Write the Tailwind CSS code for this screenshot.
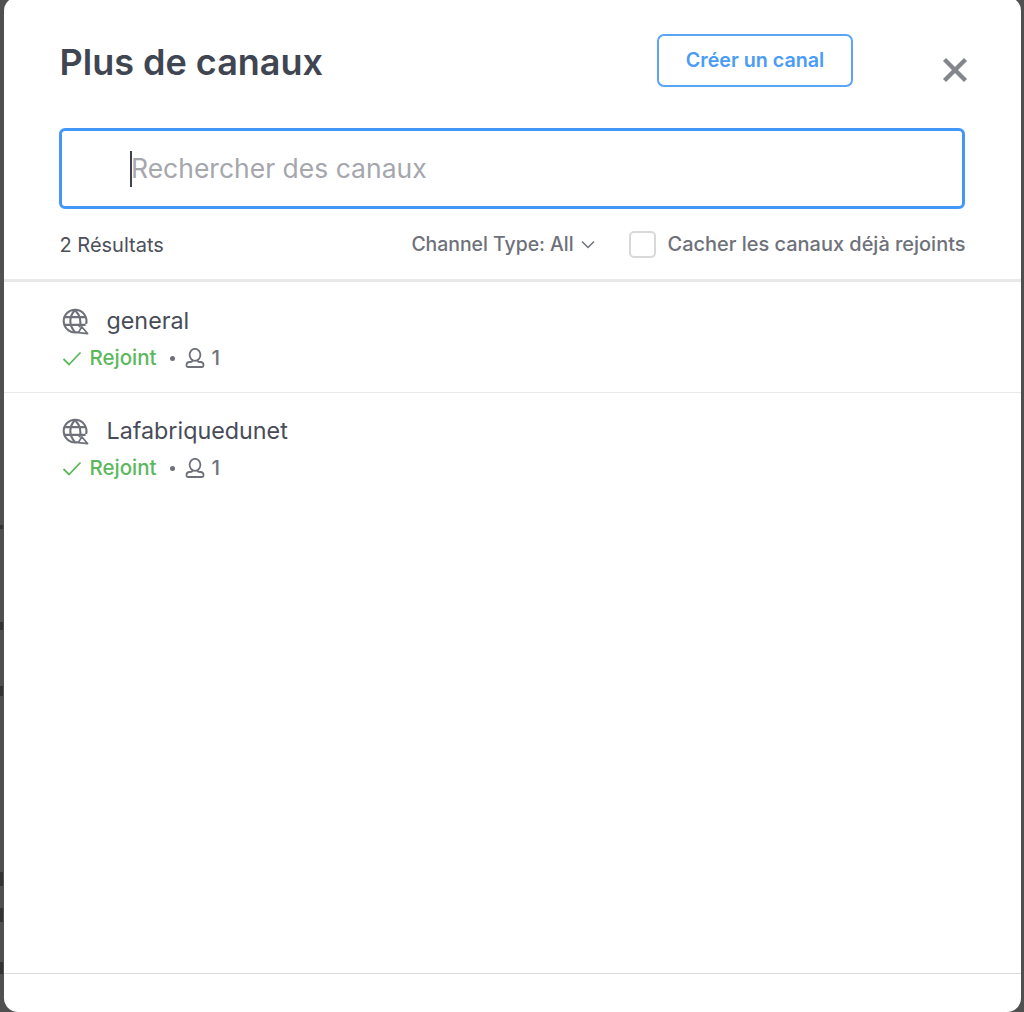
<!DOCTYPE html>
<html lang="fr">
<head>
<meta charset="utf-8">
<script src="https://cdn.jsdelivr.net/npm/@tailwindcss/browser@4"></script>
<title>Plus de canaux</title>
</head>
<body class="relative m-0 h-[1012px] w-[1024px] overflow-hidden bg-[#505050] font-['Inter',sans-serif] text-[#3f4350]">
<span class="absolute left-0 top-[525px] h-[4px] w-[3px] bg-[#333]"></span>
<span class="absolute left-0 top-[622px] h-[8px] w-[3px] bg-[#333]"></span>
<span class="absolute left-0 top-[686px] h-[10px] w-[3px] bg-[#333]"></span>
<span class="absolute left-0 top-[872px] h-[14px] w-[3px] bg-[#333]"></span>
<span class="absolute left-0 top-[908px] h-[14px] w-[3px] bg-[#333]"></span>
<span class="absolute left-0 top-[962px] h-[12px] w-[3px] bg-[#333]"></span>
<div class="relative mt-[-3px] ml-[3.5px] flex h-[1015px] w-[1017px] flex-col rounded-[14px] bg-white">
  <header class="relative flex h-[131px] shrink-0 pl-[56px] pr-[55px]">
    <h1 class="mt-[39px] text-[36px] leading-[52px] font-semibold text-[#404552]">Plus de canaux</h1>
    <button class="absolute left-[653.5px] top-[37px] flex h-[53px] w-[196px] items-center justify-center rounded-[7px] border-2 border-[#5aa5f6] bg-white text-[19.7px] font-semibold text-[#4a9cf5]">Créer un canal</button>
    <button aria-label="Fermer" class="absolute left-[938px] top-[60px] h-[26px] w-[26px] text-[#84868e]">
      <svg viewBox="0 0 26 26" class="h-[26px] w-[26px]" fill="none" stroke="currentColor" stroke-width="4.4"><path d="M2.5 2.5 23.5 23.5M23.5 2.5 2.5 23.5"/></svg>
    </button>
  </header>
  <div class="ml-[55.500px] mr-[56px] flex h-[81px] shrink-0 items-center rounded-[6px] border-[3px] border-[#4297f7] pl-[68px]">
    <span class="h-[36px] w-[2px] bg-[#3f4350]"></span>
    <span class="ml-[-1px] pb-[1px] text-[26.500px] leading-[36px] text-[#a5a7ad]">Rechercher des canaux</span>
  </div>
  <div class="flex h-[73px] shrink-0 items-center justify-between border-b-[3px] border-[#e8e8e9] pl-[56px] pr-[55px] pt-[1px]">
    <span class="text-[20px] text-[#4c505b]">2 Résultats</span>
    <div class="flex items-center">
      <span class="text-[19.400px] font-medium text-[#6e717a]">Channel Type: All</span>
      <svg viewBox="0 0 16 16" class="ml-[6px] h-[16px] w-[16px] text-[#6e717a]" fill="none" stroke="currentColor" stroke-width="1.5"><path d="M2 5.5 8 11.500 14 5.500"/></svg>
      <span class="ml-[33px] h-[27px] w-[27px] rounded-[5px] border-2 border-[#d9d9dc]"></span>
      <span class="ml-[12px] text-[19.950px] font-medium text-[#6e717a]">Cacher les canaux déjà rejoints</span>
    </div>
  </div>
  <ul class="flex-1">
    <li class="flex h-[111px] flex-col border-b border-[#e8e8e9] pl-[56px] pt-[23px]">
      <div class="flex h-[32px] items-center">
        <svg viewBox="0 0 28 28" class="ml-[2px] h-[27px] w-[27px] text-[#6e717a]" fill="none" stroke="currentColor" stroke-width="2.200"><path d="M25 16.500A11.800 11.800 0 1 0 16.500 25"/><path d="M2.500 9.500H24.500M2.500 17.500H24.500M13.500 2C7 9 7 18 13.500 25M13.500 2C20 9 20 15 18 20"/><path d="M17 25.500 20.500 19.500 26.500 26.500Z" stroke-width="1.800" stroke-linejoin="round"/></svg>
        <span class="ml-[18px] text-[23.300px] font-normal text-[#484c58]">general</span>
      </div>
      <div class="mt-[5px] flex h-[32px] items-center text-[20.500px] font-medium">
        <svg viewBox="0 0 20 20" class="ml-[2px] h-[20px] w-[20px] text-[#5cb85c]" fill="none" stroke="currentColor" stroke-width="1.800"><path d="M1.500 11 7 16.500 18.500 4.500"/></svg>
        <span class="ml-[8px] text-[#5cb85c]">Rejoint</span>
        <span class="ml-[13px] h-[5px] w-[5px] rounded-full bg-[#6e717a]"></span>
        <svg viewBox="0 0 20 20" class="ml-[10px] h-[20px] w-[20px] text-[#6e717a]" fill="none" stroke="currentColor" stroke-width="1.800"><ellipse cx="10" cy="6.800" rx="5.400" ry="6"/><path d="M7.500 12V12.500C7.500 13.500 6.500 14 5 14H4A3 3 0 0 0 1.500 17V17.500C1.500 18.200 2 19 3 19H17C18 19 18.500 18.200 18.500 17.500V17A3 3 0 0 0 16 14H15C13.500 14 12.500 13.500 12.500 12.500V12"/></svg>
        <span class="ml-[7px] text-[#6e717a]">1</span>
      </div>
    </li>
    <li class="flex h-[110px] flex-col pl-[56px] pt-[22px]">
      <div class="flex h-[32px] items-center">
        <svg viewBox="0 0 28 28" class="ml-[2px] h-[27px] w-[27px] text-[#6e717a]" fill="none" stroke="currentColor" stroke-width="2.200"><path d="M25 16.500A11.800 11.800 0 1 0 16.500 25"/><path d="M2.500 9.500H24.500M2.500 17.500H24.500M13.500 2C7 9 7 18 13.500 25M13.500 2C20 9 20 15 18 20"/><path d="M17 25.500 20.500 19.500 26.500 26.500Z" stroke-width="1.800" stroke-linejoin="round"/></svg>
        <span class="ml-[18px] text-[23.300px] font-normal text-[#484c58]">Lafabriquedunet</span>
      </div>
      <div class="mt-[5px] flex h-[32px] items-center text-[20.500px] font-medium">
        <svg viewBox="0 0 20 20" class="ml-[2px] h-[20px] w-[20px] text-[#5cb85c]" fill="none" stroke="currentColor" stroke-width="1.800"><path d="M1.500 11 7 16.500 18.500 4.500"/></svg>
        <span class="ml-[8px] text-[#5cb85c]">Rejoint</span>
        <span class="ml-[13px] h-[5px] w-[5px] rounded-full bg-[#6e717a]"></span>
        <svg viewBox="0 0 20 20" class="ml-[10px] h-[20px] w-[20px] text-[#6e717a]" fill="none" stroke="currentColor" stroke-width="1.800"><ellipse cx="10" cy="6.800" rx="5.400" ry="6"/><path d="M7.500 12V12.500C7.500 13.500 6.500 14 5 14H4A3 3 0 0 0 1.500 17V17.500C1.500 18.200 2 19 3 19H17C18 19 18.500 18.200 18.500 17.500V17A3 3 0 0 0 16 14H15C13.500 14 12.500 13.500 12.500 12.500V12"/></svg>
        <span class="ml-[7px] text-[#6e717a]">1</span>
      </div>
    </li>
  </ul>
  <footer class="h-[39px] shrink-0 border-t border-[#dcdcde]"></footer>
</div>
</body>
</html>
